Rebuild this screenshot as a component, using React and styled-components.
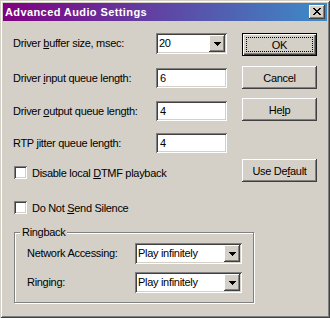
import React from "react";
import styled, { createGlobalStyle } from "styled-components";

const GlobalStyle = createGlobalStyle`
  html, body { margin: 0; padding: 0; background: #D4D0C8; }
  body {
    font-family: "Liberation Sans", Arial, sans-serif;
    font-size: 11px;
    letter-spacing: -0.3px;
    color: #000;
  }
  * { box-sizing: border-box; }
`;

const raised = `
  box-shadow: inset -1px -1px #404040, inset 1px 1px #fff,
    inset -2px -2px #808080, inset 2px 2px #D4D0C8;
`;
const sunken = `
  box-shadow: inset 1px 1px #808080, inset -1px -1px #fff,
    inset 2px 2px #404040, inset -2px -2px #D4D0C8;
`;

const Window = styled.div`
  width: 330px;
  height: 318px;
  padding: 3px;
  background: #D4D0C8;
  box-shadow: inset 1px 1px #D4D0C8, inset -1px -1px #404040,
    inset 2px 2px #fff, inset -2px -2px #808080;
  display: flex;
  flex-direction: column;
`;

const TitleBar = styled.div`
  height: 18px;
  display: flex;
  align-items: center;
  justify-content: space-between;
  background: linear-gradient(to right, #800080, #3C8CC8);
  padding: 0 2px;
`;

const TitleText = styled.span`
  color: #fff;
  font-weight: bold;
  font-size: 11px;
  letter-spacing: 0.4px;
`;

const CloseButton = styled.div`
  width: 16px;
  height: 14px;
  background: #D4D0C8;
  ${raised}
  display: flex;
  align-items: center;
  justify-content: center;
  padding-bottom: 1px;
`;

const Body = styled.div`
  padding: 12px 10px 0 10px;
  display: flex;
  flex-direction: column;
`;

const TopSection = styled.div`
  display: flex;
  gap: 15px;
  align-items: flex-start;
`;

const FieldGrid = styled.div`
  display: grid;
  grid-template-columns: 143px 71px;
  grid-template-rows: 35px 33px 32px 33px 13px;
  align-items: start;
`;

const Label = styled.div`
  height: ${(p) => p.$h}px;
  line-height: ${(p) => p.$h}px;
  white-space: nowrap;
`;

const Edit = styled.div`
  width: ${(p) => p.$w}px;
  height: 20px;
  background: #fff;
  ${sunken}
  padding-left: 4px;
  line-height: 20px;
`;

const Combo = styled.div`
  width: ${(p) => p.$w}px;
  height: 21px;
  background: #fff;
  ${sunken}
  padding: 2px;
  display: flex;
`;

const ComboText = styled.div`
  flex: 1;
  padding-left: 1px;
  line-height: 17px;
  white-space: nowrap;
`;

const DropButton = styled.div`
  width: 16px;
  background: #D4D0C8;
  ${raised}
  display: flex;
  align-items: center;
  justify-content: center;
`;

const CheckRow = styled.div`
  grid-column: 1 / -1;
  display: flex;
  align-items: center;
  gap: 5px;
  margin-left: 1px;
  margin-top: ${(p) => p.$mt || 0}px;
  height: 13px;
  white-space: nowrap;
`;

const CheckBox = styled.div`
  width: 13px;
  height: 13px;
  flex: none;
  background: #fff;
  ${sunken}
`;

const ButtonColumn = styled.div`
  display: flex;
  flex-direction: column;
  width: 75px;
`;

const Button = styled.div`
  width: 75px;
  height: 23px;
  margin-top: ${(p) => p.$mt || 0}px;
  background: #D4D0C8;
  display: flex;
  align-items: center;
  justify-content: center;
  ${(p) =>
    p.$default
      ? `box-shadow: inset 0 0 0 1px #000, inset 2px 2px #fff,
          inset -2px -2px #404040, inset -3px -3px #808080;
         padding: 4px;`
      : raised}
`;

const FocusRect = styled.div`
  flex: 1;
  align-self: stretch;
  border: 1px dotted #000;
  display: flex;
  align-items: center;
  justify-content: center;
`;

const Group = styled.fieldset`
  margin: 12px 0 0 1px;
  width: 240px;
  min-inline-size: 0;
  padding: 4px 0 9px 0;
  border: 1px solid #808080;
  box-shadow: 1px 1px 0 #fff, inset 1px 1px 0 #fff;
`;

const Legend = styled.legend`
  margin-left: 5px;
  padding: 0 2px;
  line-height: 13px;
  background: #D4D0C8;
`;

const GroupGrid = styled.div`
  display: grid;
  grid-template-columns: 108px 107px;
  row-gap: 8px;
  padding-left: 12px;
  align-items: center;
`;

const u = (s) => <u>{s}</u>;

const CloseGlyph = () => {
  const rows = [
    "XX....XX",
    ".XX..XX.",
    "..XXXX..",
    "...XX...",
    "..XXXX..",
    ".XX..XX.",
    "XX....XX",
  ];
  const rects = [];
  rows.forEach((r, y) =>
    r.split("").forEach((c, x) => {
      if (c === "X") rects.push(<rect key={`${x}-${y}`} x={x} y={y} width="1" height="1" />);
    })
  );
  return (
    <svg width="8" height="7" viewBox="0 0 8 7" shapeRendering="crispEdges" fill="#000">
      {rects}
    </svg>
  );
};

const Arrow = () => (
  <svg width="7" height="4" viewBox="0 0 7 4" shapeRendering="crispEdges" fill="#000">
    <rect x="0" y="0" width="7" height="1" />
    <rect x="1" y="1" width="5" height="1" />
    <rect x="2" y="2" width="3" height="1" />
    <rect x="3" y="3" width="1" height="1" />
  </svg>
);

const ComboBox = ({ w, value }) => (
  <Combo $w={w}>
    <ComboText>{value}</ComboText>
    <DropButton>
      <Arrow />
    </DropButton>
  </Combo>
);

export default function App() {
  return (
    <>
      <GlobalStyle />
      <Window>
        <TitleBar>
          <TitleText>Advanced Audio Settings</TitleText>
          <CloseButton>
            <CloseGlyph />
          </CloseButton>
        </TitleBar>
        <Body>
          <TopSection>
            <FieldGrid>
              <Label $h={21}>Driver {u("b")}uffer size, msec:</Label>
              <ComboBox w={71} value="20" />
              <Label $h={20}>Driver {u("i")}nput queue length:</Label>
              <Edit $w={71}>6</Edit>
              <Label $h={20}>Driver {u("o")}utput queue length:</Label>
              <Edit $w={71}>4</Edit>
              <Label $h={20}>RTP {u("j")}itter queue length:</Label>
              <Edit $w={71}>4</Edit>
              <CheckRow>
                <CheckBox />
                <span>Disable local {u("D")}TMF playback</span>
              </CheckRow>
            </FieldGrid>
            <ButtonColumn>
              <Button $default>
                <FocusRect>OK</FocusRect>
              </Button>
              <Button $mt={10}>Cancel</Button>
              <Button $mt={9}>He{u("l")}p</Button>
              <Button $mt={38}>Use De{u("f")}ault</Button>
            </ButtonColumn>
          </TopSection>
          <CheckRow $mt={19}>
            <CheckBox />
            <span>Do Not {u("S")}end Silence</span>
          </CheckRow>
          <Group>
            <Legend>Ringback</Legend>
            <GroupGrid>
              <Label $h={21}>Network Accessing:</Label>
              <ComboBox w={107} value="Play infinitely" />
              <Label $h={21}>Ringing:</Label>
              <ComboBox w={107} value="Play infinitely" />
            </GroupGrid>
          </Group>
        </Body>
      </Window>
    </>
  );
}
